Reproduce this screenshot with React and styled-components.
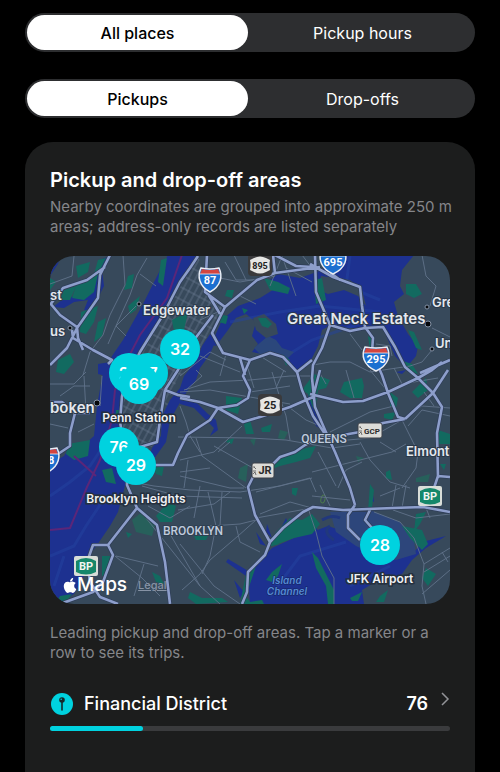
import React from "react";
import styled, { createGlobalStyle } from "styled-components";
import { FaApple } from "react-icons/fa";

/* ---------- data ---------- */

const MAP_W = 400;
const MAP_H = 348;

const markers = [
  { id: "harlem", x: 130, y: 93, count: 32 },
  { id: "chelsea", x: 79, y: 117, count: 20 },
  { id: "midtown", x: 98, y: 117, count: 37 },
  { id: "penn", x: 89, y: 128, count: 69 },
  { id: "financial", x: 69, y: 191, count: 76 },
  { id: "heights", x: 86, y: 209, count: 29 },
  { id: "jfk", x: 330, y: 289, count: 28 },
];

const areas = [{ id: "financial", name: "Financial District", count: 76, total: 327 }];

const water = [
  // hudson
  "M118 -1L148 -1L142 12L130 28L114 59L91 94L76 124L70 150L70 190L76 226L68 256L60 270L47 289L39 300L35 318L24 338L8 348L0 348L0 208L14 200L20 190L28 194L44 180L47 150L53 116L62 100L73 84L92 50L104 26Z",
  // top left creeks
  "M0 -1L11 -1L8 8L0 20Z",
  "M60 0L52 14L54 30L46 46L40 56L34 54L38 44L24 46L14 52L3 51L12 44L24 40L38 38L44 30L38 24L46 18L50 4Z",
  "M48 108L60 106L56 120L48 118Z",
  // east river
  "M78 226L84 214L98 206L102 192L111 180L112 160L120 144L130 132L134 120L147 104L152 90L160 78L166 84L160 98L150 112L146 124L138 134L128 150L120 164L116 186L106 200L96 214L84 224Z",
  // upper east river and the sound
  "M164 82L172 64L188 50L210 42L226 32L234 30L220 24L228 18L250 22L272 14L288 -1L364 -1L352 14L350 30L354 38L344 46L348 60L358 78L368 90L366 100L356 112L345 100L338 84L332 70L316 72L298 72L282 68L272 74L268 90L262 102L254 112L244 114L234 104L224 98L212 98L202 96L208 88L202 80L206 66L196 58L186 62L178 74L166 90L160 88Z",
  // flushing creek
  "M260 132L264 148L270 160L272 174L266 170L260 158L258 142Z",
  "M130 144L146 146L158 158L166 164L168 174L160 180L164 172L154 162L144 152L130 148Z",
  "M346 116L356 114L352 118Z",
  // jamaica bay
  "M200 348L198 320L212 302L222 292L244 282L262 276L278 270L296 276L312 290L332 300L350 302L366 294L372 286L396 280L376 292L362 304L352 318L340 324L330 320L322 328L312 334L314 348Z",
  "M178 303L200 316L196 320L176 306Z",
  "M206 276L216 290L210 288Z",
  "M217 268L222 282L216 276Z",
  "M236 262L240 272L232 270Z",
  "M184 324L194 336L190 342Z",
  "M262 258L268 276L258 280Z",
  "M322 232L324 246L320 244Z",
];

const parks = [
  "M26 30L44 18L48 4L56 2L48 18L44 36L34 44L22 42Z",
  "M26 10L40 6L38 16L28 22Z",
  "M14 34L26 30L20 44L10 44Z",
  "M31 56L48 50L44 66L36 78L30 76Z",
  "M8 104L20 98L24 106L14 118L6 116Z",
  "M48 66L56 62L52 80L44 86Z",
  "M78 20L84 18L82 32L74 34Z",
  "M78 50L90 40L86 54L80 58Z",
  "M111 4L117 2L113 30L108 26Z",
  "M122 64L138 56L134 74L124 76Z",
  "M0 22L6 26L0 34Z",
  "M18 188L40 184L38 200L24 204L16 198Z",
  "M66 154L69 154L68 166L65 166Z",
  "M104 212L114 210L112 220L106 218Z",
  "M52 214L62 212L66 228L56 226Z",
  "M177 34L184 34L182 42L175 40Z",
  "M214 22L228 26L240 32L238 38L220 34Z",
  "M272 22L276 44L266 48L264 24Z",
  "M208 62L216 62L222 68L218 72L212 70Z",
  "M192 52L198 54L194 58Z",
  "M168 58L178 60L176 68L168 66Z",
  "M232 98L240 104L236 110Z",
  "M176 140L192 142L188 158L176 154Z",
  "M194 168L200 164L204 178L196 178Z",
  "M211 172L222 168L220 176L212 176Z",
  "M178 184L184 182L182 188L176 186Z",
  "M220 214L226 204L240 198L256 192L266 190L260 202L246 206L230 210Z",
  "M264 118L280 124L276 132L268 134L266 150L272 168L262 150L258 138L252 134Z",
  "M294 126L312 122L314 130L312 142L300 142L290 136Z",
  "M340 136L348 142L346 152L340 150Z",
  "M334 158L346 156L342 164L334 162Z",
  "M362 136L376 122L378 134L368 142Z",
  "M356 28L366 28L372 38L364 42L356 38Z",
  "M358 74L364 76L372 94L366 92Z",
  "M350 104L362 108L368 118L356 114Z",
  "M318 80L324 84L320 94Z",
  "M388 174L400 178L400 188L388 188Z",
  "M336 216L340 214L342 224L336 222Z",
  "M390 208L396 208L394 214Z",
  "M320 228L324 234L322 252L318 256Z",
  "M106 260L118 246L126 250L122 266L110 266Z",
  "M76 276L82 278L78 282Z",
  "M102 316L110 320L114 328L106 326Z",
  "M140 336L152 342L172 342L178 346L146 348L138 342Z",
  "M144 280L158 280L156 284L146 284Z",
  "M242 232L248 232L246 240L242 238Z",
  "M226 276L240 262L252 264L262 258L270 268L262 278L244 282L228 288L218 290Z",
  "M196 318L206 310L196 340L200 346L212 344L214 348L190 348Z",
  "M222 316L232 308L228 320L222 326L216 324Z",
  "M236 268L230 288L222 290Z",
  "M262 296L268 302L276 318L284 334L284 348L278 348L276 330L266 312Z",
  "M330 340L338 334L334 346L326 346Z",
  "M300 342L312 336L308 345L302 345Z",
  "M352 270L372 274L378 288L372 294L360 282Z",
  "M366 258L376 256L370 268L364 276Z",
  "M376 312L386 318L378 330L372 322Z",
  "M10 340L22 338L16 346L6 346Z",
  "M52 300L60 300L58 318L52 320Z",
];

const paleParks = [
  "M82 264L92 256L106 266L102 280L86 276Z",
  "M230 174L238 176L234 184L228 182Z",
  "M200 184L206 182L204 190Z",
  "M190 212L198 208L196 226L188 222Z",
  "M366 222L380 218L378 226L366 226Z",
  "M306 200L314 202L308 206Z",
];

const islands = [
  "M203 62L214 58L226 68L228 78L216 82L206 74Z",
  "M271 20L300 24L312 34L316 50L308 40L294 34L278 38L268 34Z",
];

const streets = [
  "M73 -1L75 29L60 59L53 79L40 96L33 119",
  "M97 2L87 19L80 39L65 72L58 88",
  "M0 28L22 20L24 0",
  "M90 18L106 30M86 50L66 70L76 80",
  "M0 128L24 128L36 116M34 120L36 156M52 120L50 150",
  "M0 168L18 172M28 176L44 168M10 140L24 130L40 130",
  "M175 6L186 24L206 24M160 20L190 26L225 20M184 -1L196 24M220 30L232 0",
  "M232 0L246 40M252 -1L262 12M236 12L262 26",
  "M206 48L190 40M150 64L172 54",
  "M134 134L160 126L200 124L240 120L262 120",
  "M136 134L152 120L146 114M130 136L160 134L240 148",
  "M130 150L136 166L140 180L150 196",
  "M128 181L200 182L236 184L282 192L310 188",
  "M130 204L164 196L192 170M146 182L152 200L196 232",
  "M130 216L160 212M134 232L138 204M130 220L180 232L194 232",
  "M164 190L210 216M168 196L180 186",
  "M222 116L230 142L236 160L240 184M234 114L226 132",
  "M240 152L256 164L270 170M268 114L276 128M200 136L240 130",
  "M280 176L320 156L344 150M276 186L320 182L352 164L372 150L400 152",
  "M296 114L304 142M320 114L338 136M344 112L352 128L388 122",
  "M310 186L320 204L340 226L360 232M330 186L346 196M352 164L368 196L366 212L352 232",
  "M262 216L310 204L342 196L356 188M268 196L286 230M288 232L296 214L312 206",
  "M374 136L384 150M400 160L372 154L358 170",
  "M263 109L280 106L300 106L320 116L360 110L372 106L382 94",
  "M382 72L400 81M372 -1L376 20L386 30L380 50M300 78L312 94M326 88L340 90L342 100",
  "M82 226L104 230L140 234L190 236L230 230L262 222",
  "M92 230L128 240L192 242M128 254L164 248L180 236M158 236L166 270L160 300L152 318",
  "M160 270L190 268L206 264M172 236L170 270M150 230L144 262",
  "M96 262L150 330L170 348M120 278L150 330M130 288L164 330L190 348",
  "M132 334L150 318L160 304L188 280L206 264M186 270L190 286L210 296",
  "M98 250L120 262L140 250M60 296L92 322L110 340M66 300L108 310M84 340L94 308",
  "M206 236L260 222L266 236M206 262L262 252M210 258L240 246L262 252",
  "M258 252L266 276L272 300L284 322L284 348",
  "M262 240L300 244M270 229L280 250M330 240L350 232M346 229L342 252M356 229L352 252",
  "M324 256L350 266L364 282L374 308L372 330L376 348",
  "M374 308L400 292M374 316L400 300M372 338L400 314M392 296L398 306",
  "M343 254L366 262L400 258M376 252L380 262",
  "M130 120L160 96L176 104M150 100L190 116M196 106L204 132M210 100L236 116M176 98L170 120",
];

const highways = [
  "M60 -1L50 19L48 42L27 72L17 92L0 109",
  "M0 49L13 32L37 24L55 11",
  "M0 47L10 59L27 71L28 82L33 94",
  "M22 74L23 82L43 94L62 104L58 108",
  "M148 0L140 12L130 26L113 59L90 96L78 120L72 140L70 166L76 200L78 216",
  "M157 -1L155 36L175 51L170 61L162 77L173 97L200 104L220 97L233 101L247 116",
  "M158 38L170 58M163 59L144 84L128 114L115 134",
  "M175 51L207 24L225 17L270 11",
  "M223 -1L225 17M225 -1L246 10L262 11",
  "M190 102L195 119M200 104L193 120L200 134L198 142L187 149L168 152",
  "M265 -1L266 36L280 69L272 92L263 109L262 122L265 151L275 174L285 196L300 232L305 249",
  "M260 8L283 21L310 31L312 50L315 71L323 82L322 96L332 119L338 137L348 161L355 163",
  "M276 8L282 18L290 24",
  "M280 69L300 75L315 72L333 71L345 91L355 111L368 122L383 137L392 151L387 177L388 222",
  "M400 104L370 117M262 104L247 116L252 134L263 160L275 178",
  "M130 142L150 146L168 152L193 166L210 161L240 151L263 141",
  "M168 152L160 164L137 179L128 197L123 209L100 209",
  "M115 134L128 139L140 141M115 134L110 164L107 186L90 191",
  "M0 146L12 146L25 157L20 177L20 190L5 200M25 157L40 157",
  "M263 141L270 114M260 138L293 146L313 145L338 136L368 122L382 114L392 106",
  "M355 163L383 137L398 114",
  "M275 182L293 179L310 176L333 167L355 163",
  "M275 180L255 189L245 196L230 201L220 211L203 221L198 231L205 259L220 286",
  "M192 348L197 336L198 316L215 299L220 286L233 272L253 256L263 251L293 254L343 252L373 251L400 256",
  "M305 249L298 259L298 272L310 284M320 254L315 264L322 272",
  "M77 214L77 229L87 252L58 289L63 299L53 326L43 336L10 348",
  "M87 252L107 269L115 306L120 348",
  "M58 289L43 289L37 306L40 326L50 341L68 348",
  "M388 220L400 221M388 220L384 232L372 250",
];

const places = [
  { x: 93, y: 59, text: "Edgewater", size: 13 },
  { x: 237, y: 68, text: "Great Neck Estates", size: 15 },
  { x: 382, y: 51, text: "Gre", size: 13 },
  { x: 385, y: 92, text: "Un", size: 13 },
  { x: 356, y: 200, text: "Elmont", size: 13 },
  { x: 0, y: 157, text: "boken", size: 15 },
  { x: 0, y: 80, text: "us", size: 13 },
  { x: 0, y: 44, text: "st", size: 13 },
];

const towns = [
  [89, 48, 2],
  [20, 72, 2],
  [47, 147, 3],
  [377, 51, 2],
  [378, 68, 3],
  [382, 93, 2],
];

/* ---------- styled components ---------- */

const GlobalStyle = createGlobalStyle`
  * {
    box-sizing: border-box;
  }
  body {
    margin: 0;
    background: #000;
    color: #fff;
    font-family: Inter, "Liberation Sans", sans-serif;
  }
  button {
    font: inherit;
    color: inherit;
    border: 0;
    cursor: pointer;
  }
`;

const Page = styled.main`
  display: flex;
  flex-direction: column;
  min-height: 100vh;
  padding: 13px 25px 0;
`;

const Segments = styled.div`
  display: flex;
  gap: 4px;
  height: 39px;
  padding: 2px;
  margin-bottom: 27px;
  border-radius: 20px;
  background: #2d2e30;
`;

const Segment = styled.button`
  flex: 1;
  padding: 0;
  border-radius: 18px;
  font-size: 16px;
  font-weight: ${({ $active }) => ($active ? 500 : 400)};
  background: ${({ $active }) => ($active ? "#fff" : "transparent")};
  color: ${({ $active }) => ($active ? "#000" : "#fff")};
`;

const Card = styled.section`
  flex: 1;
  margin-top: -3px;
  padding: 25px 25px 40px;
  border-radius: 28px 28px 0 0;
  background: #1c1d1d;
`;

const Title = styled.h1`
  margin: 0;
  font-size: 20px;
  line-height: 26px;
  font-weight: 600;
`;

/* runs a little into the card padding so long lines do not break early */
const Note = styled.p`
  margin: 0 -8px 0 0;
  padding-top: 4px;
  font-size: 15px;
  line-height: 20px;
  color: #85868a;
`;

const MapFrame = styled.div`
  position: relative;
  aspect-ratio: ${MAP_W} / ${MAP_H};
  margin: 19px 0 15px;
  border-radius: 24px;
  overflow: hidden;
`;

const MapCanvas = styled.svg`
  display: block;
  width: 100%;
  height: 100%;
`;

const PlaceLabel = styled.text`
  font-size: ${({ $size }) => $size}px;
  font-weight: 600;
  fill: #e4e8ee;
  stroke: #2b394a;
  stroke-width: 2px;
  paint-order: stroke;
`;

const AreaLabel = styled.text`
  font-size: 12px;
  font-weight: 600;
  fill: #f0f1f4;
  stroke: #25303e;
  stroke-width: 3px;
  paint-order: stroke;
  text-anchor: middle;
`;

const BoroughLabel = styled.text`
  font-family: Roboto, "Liberation Sans", sans-serif;
  font-size: 12px;
  font-weight: 500;
  fill: #c0cbdc;
  stroke: #2f4052;
  stroke-width: 2px;
  paint-order: stroke;
  text-anchor: middle;
`;

const WaterLabel = styled.text`
  font-size: 10px;
  font-weight: 600;
  font-style: italic;
  fill: #558ad4;
  stroke: #14245e;
  stroke-width: 1px;
  paint-order: stroke;
  text-anchor: middle;
`;

const SignText = styled.text`
  font-family: Roboto, "Liberation Sans", sans-serif;
  font-size: ${({ $size }) => $size || 10}px;
  font-weight: 700;
  text-anchor: middle;
`;

const Marker = styled.button`
  position: absolute;
  width: 40px;
  height: 40px;
  padding: 0;
  transform: translate(-50%, -50%);
  border-radius: 50%;
  background: #00d2df;
  font-size: 16px;
  font-weight: 600;
`;

const Attribution = styled.div`
  position: absolute;
  left: 13px;
  bottom: 7px;
  display: flex;
  align-items: center;
  font-size: 19px;
  line-height: 24px;
  font-weight: 500;

  svg {
    width: 14px;
    height: 17px;
  }
`;

const LegalLink = styled.a`
  margin-left: 11px;
  font-size: 11px;
  font-weight: 500;
  color: #8793a5;
`;

const AreaList = styled.ul`
  margin: 0;
  padding: 28px 0 0;
  list-style: none;
`;

const AreaButton = styled.button`
  display: flex;
  align-items: center;
  width: 100%;
  height: 24px;
  padding: 0;
  background: none;
  font-size: 18px;
  text-align: left;
`;

const AreaName = styled.span`
  flex: 1;
  padding-left: 11px;
  font-weight: 500;
`;

const AreaCount = styled.span`
  padding-right: 13px;
  font-weight: 600;
`;

const Chevron = styled.svg`
  width: 9px;
  height: 20px;
  align-self: flex-start;
  margin-top: -2px;
`;

const Track = styled.div`
  height: 5px;
  margin-top: 11px;
  border-radius: 3px;
  background: #3a3b3d;
`;

const Fill = styled.div`
  height: 100%;
  border-radius: 3px;
  background: #00d2df;
`;

/* ---------- map signs ---------- */

const Interstate = ({ x, y, label, half = 13 }) => (
  <g transform={`translate(${x} ${y})`}>
    <path
      d={`M${-half + 2} -12Q0 -10 ${half - 2} -12C${half + 2} -4 ${half} 6 0 12C${-half} 6 ${-half - 2} -4 ${-half + 2} -12Z`}
      fill="#1b6fd0"
      stroke="#e8ecf4"
      strokeWidth="1.5"
    />
    <path d={`M${-half + 3} -11Q0 -9 ${half - 3} -11L${half - 1} -6L${-half + 1} -6Z`} fill="#d2453f" />
    <path d={`M${-half + 1} -6H${half - 1}`} stroke="#e8ecf4" strokeWidth="0.8" />
    <SignText y="4" fill="#fff" $size={11}>{label}</SignText>
  </g>
);

const StateRoute = ({ x, y, label }) => (
  <g transform={`translate(${x} ${y})`}>
    <rect x="-12" y="-11" width="24" height="22" rx="4" fill="#3a3a3c" />
    <path d="M-6 -7Q0 -10 6 -7L10 -5Q9 0 10 5L6 7Q0 10 -6 7L-10 5Q-9 0 -10 -5Z" fill="#e6e6e4" />
    <SignText y="4" fill="#222" $size={label.length > 2 ? 9 : 11}>{label}</SignText>
  </g>
);

const Parkway = ({ x, y, label, half = 11 }) => (
  <g transform={`translate(${x} ${y})`}>
    <rect x={-half} y="-8" width={half * 2} height="15" rx="2" fill="#dcdcd8" stroke="#3c4148" />
    <path
      d={`M${-half + 2} -4l2 2M${-half + 1} 0h3M${-half + 1} 3l2 -2l1 3M${-half + 2} -5v2`}
      stroke="#555"
      strokeWidth="0.8"
      fill="none"
    />
    <SignText x="2" y="3" fill="#2a2a2a" $size={label.length > 2 ? 8 : 11}>{label}</SignText>
  </g>
);

const BeltParkway = ({ x, y }) => (
  <g transform={`translate(${x} ${y})`}>
    <rect x="-12" y="-10" width="24" height="20" rx="2" fill="#d8ddd8" />
    <path d="M-10 -5Q0 -11 10 -5V6Q0 11 -10 6Z" fill="#15876a" />
    <SignText y="4" fill="#f2f5f2" $size={11}>BP</SignText>
  </g>
);

const CityMap = () => (
  <MapCanvas viewBox={`0 0 ${MAP_W} ${MAP_H}`} preserveAspectRatio="xMidYMid slice">
    <defs>
      <pattern id="grid" width="11" height="6" patternUnits="userSpaceOnUse" patternTransform="rotate(-62)">
        <path d="M0 1H11M1 0V6" stroke="#71829a" strokeWidth="0.6" fill="none" />
      </pattern>
    </defs>

    <rect width={MAP_W} height={MAP_H} fill="#37495b" />
    <path d="M148 0L157 30L172 52L160 76L148 96L124 130L112 170L106 186L90 204L78 222L72 190L71 150L78 122L114 60L140 14Z" fill="url(#grid)" />

    <path d={water.join("")} fill="#1d3190" />
    <path
      d="M0 240L20 226L40 210L60 180M0 300L24 290L36 270L56 240M4 330L14 300M180 66L230 56L270 50L330 56M236 100L262 84L320 64M300 0L296 30L330 44M220 340L250 300L296 286M300 330L340 310"
      stroke="#24439f"
      strokeWidth="3"
      opacity="0.5"
      fill="none"
    />
    <path d="M204 92L218 80L226 84L232 92L244 96L238 102L222 98L210 98Z" fill="#2b477b" />
    <path d={islands.join("")} fill="#37495b" />
    <path d="M280 256L320 254L350 266L364 284L366 298L346 304L328 300L306 290L286 276Z" fill="#2d467b" />
    <path d={parks.join("")} fill="#126a60" />
    <path d={paleParks.join("")} fill="#27605b" />
    <path d="M272 264Q282 258 290 262M280 270Q272 276 284 284" stroke="#21387d" strokeWidth="3" fill="none" />
    <ellipse cx="273" cy="243" rx="2" ry="4" fill="none" stroke="#4c7a4c" transform="rotate(15 273 243)" />

    <path
      d="M132 -1L117 42L90 79L76 106L65 134L62 164L50 204L37 231L20 272L0 274M24 200L46 220"
      stroke="#5b2679"
      strokeWidth="2"
      fill="none"
    />

    <path d={streets.join("")} stroke="#61738a" strokeWidth="0.9" fill="none" />
    <path d={highways.join("")} stroke="#2e3d58" strokeWidth="4" fill="none" strokeLinejoin="round" />
    <path d={highways.join("")} stroke="#8d9ecb" strokeWidth="2.6" fill="none" strokeLinejoin="round" />

    <Interstate x={160} y={24} label="87" half={11} />
    <Interstate x={283} y={6} label="695" />
    <Interstate x={326} y={103} label="295" />
    <Interstate x={-2} y={204} label="78" half={11} />
    <StateRoute x={210} y={9} label="895" />
    <StateRoute x={220} y={149} label="25" />
    <Parkway x={213} y={215} label="JR" />
    <Parkway x={320} y={175} label="GCP" half={12} />
    <BeltParkway x={380} y={240} />
    <BeltParkway x={36} y={310} />

    {towns.map(([x, y, r]) => (
      <circle key={`${x}-${y}`} cx={x} cy={y} r={r} fill="#05070a" stroke="#8391a5" />
    ))}
    {places.map((p) => (
      <PlaceLabel key={p.text} x={p.x} y={p.y} $size={p.size}>{p.text}</PlaceLabel>
    ))}
    <BoroughLabel x="274" y="187">QUEENS</BoroughLabel>
    <BoroughLabel x="143" y="279">BROOKLYN</BoroughLabel>
    <WaterLabel x="237" y="328">Island</WaterLabel>
    <WaterLabel x="237" y="339">Channel</WaterLabel>
    <AreaLabel x="89" y="166">Penn Station</AreaLabel>
    <AreaLabel x="86" y="247">Brooklyn Heights</AreaLabel>
    <AreaLabel x="330" y="327">JFK Airport</AreaLabel>
  </MapCanvas>
);

/* ---------- page ---------- */

const SegmentedControl = ({ label, options }) => {
  const [active, setActive] = React.useState(options[0]);

  return (
    <Segments role="group" aria-label={label}>
      {options.map((option) => (
        <Segment
          key={option}
          type="button"
          $active={option === active}
          aria-pressed={option === active}
          onClick={() => setActive(option)}
        >
          {option}
        </Segment>
      ))}
    </Segments>
  );
};

const App = () => (
  <>
    <GlobalStyle />
    <Page>
      <SegmentedControl label="View" options={["All places", "Pickup hours"]} />
      <SegmentedControl label="Trip end" options={["Pickups", "Drop-offs"]} />

      <Card>
        <Title>Pickup and drop-off areas</Title>
        <Note>
          Nearby coordinates are grouped into approximate 250 m areas; address-only records are
          listed separately
        </Note>

        <MapFrame>
          <CityMap />
          {markers.map((m) => (
            <Marker
              key={m.id}
              type="button"
              style={{ left: `${(m.x / MAP_W) * 100}%`, top: `${(m.y / MAP_H) * 100}%` }}
            >
              {m.count}
            </Marker>
          ))}
          <Attribution>
            <FaApple />
            Maps
            <LegalLink href="#legal">Legal</LegalLink>
          </Attribution>
        </MapFrame>

        <Note>Leading pickup and drop-off areas. Tap a marker or a row to see its trips.</Note>

        <AreaList>
          {areas.map((area) => (
            <li key={area.id}>
              <AreaButton type="button">
                <svg width="23" height="23" viewBox="0 0 23 23">
                  <circle cx="12" cy="12" r="11" fill="#00d2df" />
                  <circle cx="12" cy="8" r="2.8" fill="#14292b" />
                  <path d="M12 10V18" stroke="#14292b" strokeWidth="1.6" strokeLinecap="round" />
                  <circle cx="11.2" cy="7.2" r="0.8" fill="#00d2df" />
                </svg>
                <AreaName>{area.name}</AreaName>
                <AreaCount>{area.count}</AreaCount>
                <Chevron viewBox="0 0 9 20" fill="none" stroke="#929397" strokeWidth="1.5">
                  <path d="M1 4L7 10L1 16" />
                </Chevron>
              </AreaButton>
              <Track>
                <Fill style={{ width: `${(area.count / area.total) * 100}%` }} />
              </Track>
            </li>
          ))}
        </AreaList>
      </Card>
    </Page>
  </>
);

export default App;
